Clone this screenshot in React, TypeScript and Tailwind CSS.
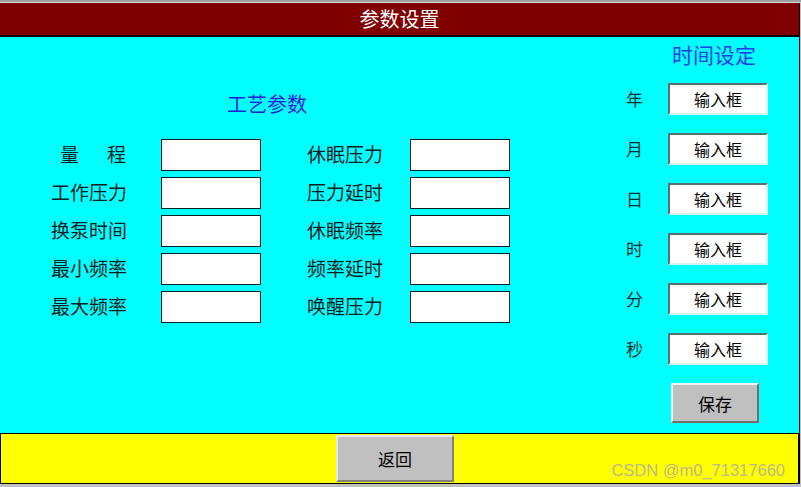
import React from 'react';

const leftRows: [string, string][] = [
  ['量程', '休眠压力'],
  ['工作压力', '压力延时'],
  ['换泵时间', '休眠频率'],
  ['最小频率', '频率延时'],
  ['最大频率', '唤醒压力'],
];

const timeRows = ['年', '月', '日', '时', '分', '秒'];

function Label({ text }: { text: string }) {
  if (text === '量程') {
    return (
      <div className="w-[75px] pl-[9px] pb-[4px] flex justify-between text-[19px] leading-none text-[#102020]">
        <span>量</span>
        <span>程</span>
      </div>
    );
  }
  return <div className="w-[75px] pb-[4px] text-[19px] leading-none text-[#102020] whitespace-nowrap">{text}</div>;
}

function Box() {
  return <div className="w-[100px] h-[32px] bg-white border border-[#0a2020]" />;
}

export default function App() {
  return (
    <div className="w-[801px] h-[487px] bg-[#c0c0c0] flex flex-col font-['Noto_Sans_CJK_SC',sans-serif]">
      {/* top strip */}
      <div className="h-[3px] bg-[#a0a0a0] border-b border-[#d8d8d8]" />

      <div className="w-[800px] flex-1 flex flex-col border-r border-black">
        {/* header */}
        <div className="h-[34px] bg-[#800000] border-b-2 border-black flex items-center justify-center">
          <span className="text-white text-[20px] leading-none">参数设置</span>
        </div>

        {/* main */}
        <div className="flex-1 bg-[#00ffff] flex">
          {/* process params */}
          <div className="pl-[51px] pt-[53px]">
            <div className="pl-[176px] h-[28px] flex items-center text-[20px] leading-none text-[#2222dd]">工艺参数</div>
            <div className="mt-[21px] flex flex-col gap-[6px]">
              {leftRows.map(([a, b]) => (
                <div key={a} className="flex items-center">
                  <Label text={a} />
                  <div className="ml-[35px]">
                    <Box />
                  </div>
                  <div className="ml-[46px]">
                    <Label text={b} />
                  </div>
                  <div className="ml-[28px]">
                    <Box />
                  </div>
                </div>
              ))}
            </div>
          </div>

          {/* time setting */}
          <div className="ml-auto mr-[31px] pt-[3px] flex flex-col">
            <div className="pl-[46px] h-[28px] flex items-center text-[21px] leading-none text-[#1e3cf0]">时间设定</div>
            <div className="mt-[15px] flex flex-col gap-[18px]">
              {timeRows.map((t) => (
                <div key={t} className="flex items-center">
                  <div className="w-[42px] pb-[2px] text-[17px] leading-none text-[#0a3030]">{t}</div>
                  <div className="w-[100px] h-[32px] bg-white border-2 border-t-[#5a7070] border-l-[#5a7070] border-b-[#d8f0f0] border-r-[#d8f0f0] flex items-center justify-center text-[16px] leading-none text-black">
                    输入框
                  </div>
                </div>
              ))}
            </div>
            <button className="mt-[18px] ml-[45px] w-[88px] h-[40px] bg-[#c0c0c0] border-2 border-t-[#f0f0f0] border-l-[#f0f0f0] border-b-[#707070] border-r-[#707070] text-[17px] leading-none text-black">
              保存
            </button>
          </div>
        </div>

        {/* footer */}
        <div className="h-[51px] bg-[#ffff00] border border-black flex">
          <button className="ml-[335px] mt-px w-[118px] h-[47px] bg-[#c0c0c0] border-2 border-t-[#e8e8e8] border-l-[#e8e8e8] border-b-[#808080] border-r-[#808080] text-[17px] leading-none text-black">
            返回
          </button>
          <span className="ml-auto mr-[13px] self-end mb-[5px] font-['Liberation_Sans',sans-serif] text-[16.5px] leading-none text-[#bcb98a]">
            CSDN @m0_71317660
          </span>
        </div>
      </div>

      {/* bottom strip */}
      <div className="h-[3px] bg-[#c0c0c0]" />
    </div>
  );
}
